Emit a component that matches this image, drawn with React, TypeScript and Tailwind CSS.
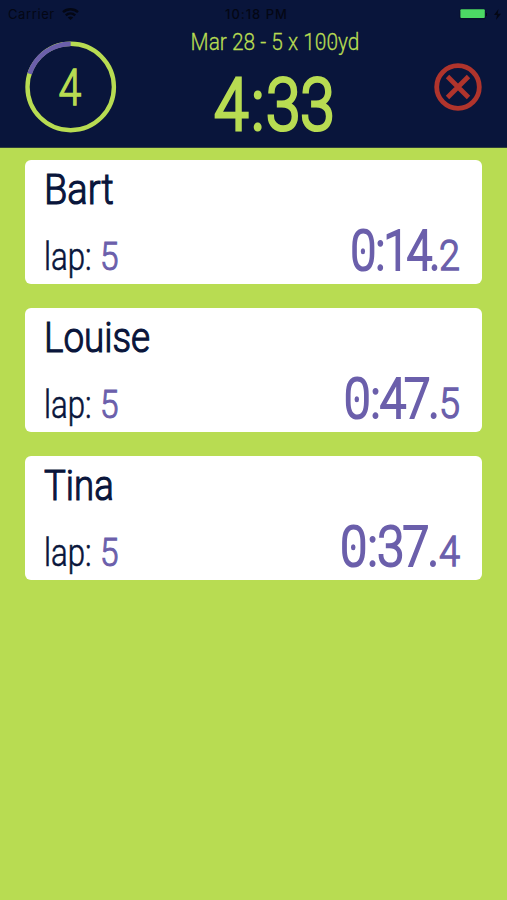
interface Swimmer {
  name: string;
  lap: number;
  time: string;
  tenths: string;
  timeClass: string;
  nameClass: string;
}

const swimmers: Swimmer[] = [
  {
    name: "Bart",
    lap: 5,
    time: "0:14.",
    tenths: "2",
    timeClass: "scale-x-[0.84] tracking-[-3.4px]",
    nameClass: "scale-x-[0.885]",
  },
  {
    name: "Louise",
    lap: 5,
    time: "0:47.",
    tenths: "5",
    timeClass: "scale-x-[0.87] tracking-[-2.6px]",
    nameClass: "scale-x-[0.855]",
  },
  {
    name: "Tina",
    lap: 5,
    time: "0:37.",
    tenths: "4",
    timeClass: "scale-x-[0.88] tracking-[-2px]",
    nameClass: "scale-x-[0.85]",
  },
];

// Renders zeros with a dot in the middle, colons get a little room
function Digits({ value }: { value: string }) {
  return (
    <>
      {value.split("").map((char, i) =>
        char === "0" ? (
          <span key={i} className="relative inline-block">
            0
            <span className="absolute left-[0.27em] top-1/2 size-[0.1em] -translate-x-1/2 -translate-y-1/2 rounded-full bg-current" />
          </span>
        ) : (
          <span key={i} className={char === ":" ? "ml-[0.045em] mr-[0.03em]" : undefined}>
            {char}
          </span>
        )
      )}
    </>
  );
}

function StatusBar() {
  return (
    <div className="flex h-7 items-center justify-between pl-2 pr-1.5 font-['Inter','Liberation_Sans',sans-serif] text-[13px] leading-none text-[#040714]">
      <div className="flex w-[120px] items-center gap-[7px]">
        <span className="tracking-[0.6px]">Carrier</span>
        <svg width="17" height="12" viewBox="0 0 17 12" fill="none" stroke="currentColor" strokeWidth="2.4">
          <path d="M1 4.2C5.2 0.2 11.8 0.2 16 4.2" />
          <path d="M3.8 7.3C6.5 4.8 10.5 4.8 13.2 7.3" />
          <path d="M8.5 12L5.8 9.4C7.3 8.1 9.7 8.1 11.2 9.4Z" fill="currentColor" stroke="none" />
        </svg>
      </div>
      <span className="whitespace-nowrap pl-1 font-medium tracking-[1px]">10:18 PM</span>
      <div className="flex w-[120px] items-center justify-end gap-[6px]">
        <svg width="29" height="11" viewBox="0 0 29 11">
          <rect x="0.5" y="0" width="26" height="10.4" rx="2" fill="#08102b" />
          <rect x="1.4" y="0.2" width="24.4" height="8.8" rx="1" fill="#4cd964" />
          <path d="M27.5 4v3" stroke="#040714" />
        </svg>
        <svg width="7" height="11" viewBox="0 0 7 11" fill="currentColor">
          <path d="M4.5 0L0 6h3L2 11l5-6.2H3.7z" />
        </svg>
      </div>
    </div>
  );
}

function LapRing({ lap }: { lap: number }) {
  return (
    <div className="relative flex size-[92px] items-center justify-center">
      <svg className="absolute inset-0" width="92" height="92" viewBox="0 0 92 92" fill="none" strokeWidth="4.4">
        <circle cx="45.7" cy="46" r="43.2" stroke="#b8dc52" />
        <path d="M45.7 2.8A43.2 43.2 0 0 0 4.6 32.7" stroke="#6b5fab" strokeWidth="4.8" />
      </svg>
      <span className="relative right-px top-px inline-block scale-x-[0.82] text-[50px] font-light leading-none [-webkit-text-stroke:1.4px_currentColor] [stroke-linejoin:round]">
        {lap}
      </span>
    </div>
  );
}

function Header() {
  return (
    <header className="h-[148px] border-b border-[#2f3f3c] bg-[#09153b] text-[#b8dc52]">
      <StatusBar />
      <div className="flex justify-between px-[25px]">
        <div className="pt-[13px]">
          <LapRing lap={4} />
        </div>
        <div className="flex w-[270px] flex-col items-center">
          <div className="h-[30px] scale-x-[0.87] whitespace-nowrap text-[24px] font-light leading-[29px] [-webkit-text-stroke:0.3px_currentColor]">
            Mar 28 - 5 x <Digits value="100" />yd
          </div>
          <div className="scale-x-[0.86] pr-[3px] pt-px text-[72px] font-light leading-[94px] [-webkit-text-stroke:3.2px_currentColor] [stroke-linejoin:round]">
            <Digits value="4:33" />
          </div>
        </div>
        <div className="pt-[35px]">
          <button type="button" aria-label="Close" className="block size-12">
            <svg width="48" height="48" viewBox="0 0 48 48" fill="none" stroke="#b0342c" strokeWidth="4.8">
              <circle cx="24" cy="24" r="21.3" />
              <path d="M13.5 13.5L34.5 34.5M34.5 13.5L13.5 34.5" />
            </svg>
          </button>
        </div>
      </div>
    </header>
  );
}

function SwimmerCard({ swimmer }: { swimmer: Swimmer }) {
  return (
    <article className="flex h-[124px] flex-col rounded-[6px] bg-white pl-[19px] pr-[22px] text-[#09153b]">
      <h2 className="flex h-[59px] text-[43px] font-light leading-[58px] [-webkit-text-stroke:1.2px_currentColor] [stroke-linejoin:round]">
        <span className={`origin-left ${swimmer.nameClass}`}>{swimmer.name}</span>
      </h2>
      <div className="flex h-[64px] items-baseline justify-between font-light [stroke-linejoin:round]">
        <div className="flex w-[74px] justify-between text-[38px] leading-[64px] [-webkit-text-stroke:0.6px_currentColor]">
          <span className="w-[48px] origin-left scale-x-[0.82]">lap:</span>
          <span className="w-[18px] origin-left scale-x-[0.88] text-[#6b5fab] [-webkit-text-stroke:1px_currentColor]">
            {swimmer.lap}
          </span>
        </div>
        <div className="flex items-baseline text-[#6b5fab]">
          <span
            className={`mr-[2px] origin-right text-[55px] leading-[64px] [-webkit-text-stroke:2.2px_currentColor] ${swimmer.timeClass}`}
          >
            <Digits value={swimmer.time} />
          </span>
          <span className="w-[21px] origin-left scale-x-[0.9] text-[42px] leading-[64px] [-webkit-text-stroke:1.4px_currentColor]">
            {swimmer.tenths}
          </span>
        </div>
      </div>
    </article>
  );
}

export default function App() {
  return (
    <div className="h-[900px] w-[507px] overflow-hidden bg-[#b8dc52] font-['Roboto','Liberation_Sans',sans-serif]">
      <Header />
      <main className="flex flex-col gap-[24px] px-[25px] pt-3">
        {swimmers.map((swimmer) => (
          <SwimmerCard key={swimmer.name} swimmer={swimmer} />
        ))}
      </main>
    </div>
  );
}
